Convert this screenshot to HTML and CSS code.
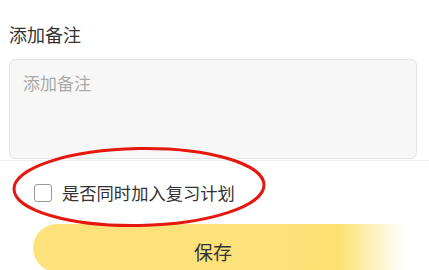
FILE: index.html
```html
<!DOCTYPE html>
<html lang="zh-CN">
<head>
  <meta charset="UTF-8">
  <meta name="viewport" content="width=device-width, initial-scale=1.0">
  <title>添加备注</title>
  <link rel="stylesheet" href="styles.css">
</head>
<body>
  <div class="page">
    <div class="note-section">
      <div class="note-title">添加备注</div>
      <div class="note-box">
        <textarea class="note-input" placeholder="添加备注"></textarea>
      </div>
    </div>

    <label class="review-row">
      <input type="checkbox" class="review-check">
      <span class="review-text">是否同时加入复习计划</span>
    </label>

    <div class="actions">
      <button class="save-btn">保存</button>
    </div>

    <!-- red annotation ring drawn over the checkbox row -->
    <svg class="mark" width="429" height="270" viewBox="0 0 429 270">
      <ellipse cx="139" cy="187" rx="125" ry="38.5" fill="none" stroke="#e5170f" stroke-width="3" transform="rotate(-1 139 187)"/>
    </svg>
  </div>
</body>
</html>
```

FILE: styles.css
```css
* {
  box-sizing: border-box;
}

body {
  margin: 0;
  background: #fff;
  color: #333;
  font-family: 'Noto Sans CJK SC', 'Noto Sans', sans-serif;
  overflow: hidden;
}

.page {
  position: relative;
  width: 429px;
  height: 270px;
  overflow: hidden;
}

.note-section {
  padding: 22px 12px 1px 9px;
  border-bottom: 1px solid #ededed;
}

.note-title {
  font-size: 18px;
  line-height: 24px;
  margin-bottom: 13px;
}

.note-box {
  height: 100px;
  background: #f7f7f7;
  border: 1px solid #e4e4e4;
  border-radius: 6px;
  padding: 11px 13px;
}

.note-input {
  display: block;
  width: 100%;
  height: 100%;
  border: none;
  outline: none;
  resize: none;
  background: transparent;
  padding: 0;
  font-family: inherit;
  font-size: 17px;
  line-height: 24px;
  color: #333;
}

.note-input::placeholder {
  color: #aaa;
}

.review-row {
  display: flex;
  align-items: center;
  height: 63px;
  padding-left: 34px;
}

.review-check {
  appearance: none;
  -webkit-appearance: none;
  width: 18px;
  height: 18px;
  margin: 0 10px 0 0;
  border: 1.5px solid #999;
  border-radius: 3px;
  background: #fff;
}

.review-text {
  font-size: 17.3px;
  line-height: 22px;
  color: #333;
}

.actions {
  padding-left: 33px;
}

.save-btn {
  display: block;
  width: 372px;
  height: 48px;
  border: none;
  border-radius: 24px 0 0 24px;
  background: linear-gradient(to right, #fde27c 0, #fde27c 62%, #fde070 82%, rgba(253, 226, 124, 0) 100%);
  font-family: inherit;
  font-size: 19px;
  color: #333;
  padding: 6px 12px 0 0;
  text-align: center;
}

.mark {
  position: absolute;
  left: 0;
  top: 0;
  pointer-events: none;
}
```
